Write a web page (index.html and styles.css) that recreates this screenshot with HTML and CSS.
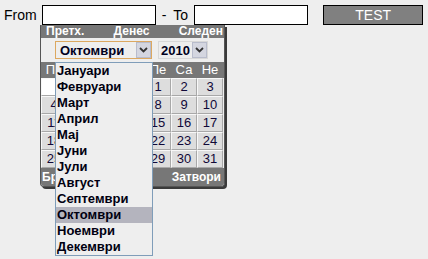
FILE: index.html
```html
<!DOCTYPE html>
<html lang="mk">
<head>
    <meta charset="UTF-8">
    <title>Календар</title>
    <link rel="stylesheet" href="styles.css">
</head>
<body>
    <div class="filter-bar">
        <span class="filter-label">From</span>
        <input type="text" class="filter-input">
        <span class="filter-dash">-</span>
        <span class="filter-label">To</span>
        <input type="text" class="filter-input">
        <button type="button" class="test-btn">TEST</button>
    </div>

    <div class="calendar">
        <div class="cal-nav">
            <span>Претх.</span>
            <span>Денес</span>
            <span>Следен</span>
        </div>
        <div class="cal-selects">
            <div class="fake-select month-select">
                <span class="fake-select-text">Октомври</span>
                <span class="fake-select-btn">
                    <svg width="9" height="6" viewBox="0 0 9 6"><path d="M1 1 L4.5 4.5 L8 1" fill="none" stroke="#333" stroke-width="1.8"/></svg>
                </span>
            </div>
            <div class="fake-select year-select">
                <span class="fake-select-text">2010</span>
                <span class="fake-select-btn">
                    <svg width="9" height="6" viewBox="0 0 9 6"><path d="M1 1 L4.5 4.5 L8 1" fill="none" stroke="#333" stroke-width="1.8"/></svg>
                </span>
            </div>
        </div>
        <div class="cal-grid cal-head">
            <span>По</span><span>Вт</span><span>Ср</span><span>Че</span><span>Пе</span><span>Са</span><span>Не</span>
        </div>
        <div class="cal-grid cal-body">
            <span class="day empty"></span><span class="day empty"></span><span class="day empty"></span><span class="day empty"></span>
            <span class="day">1</span><span class="day">2</span><span class="day">3</span>
            <span class="day">4</span><span class="day">5</span><span class="day">6</span><span class="day">7</span>
            <span class="day">8</span><span class="day">9</span><span class="day">10</span>
            <span class="day">11</span><span class="day">12</span><span class="day">13</span><span class="day">14</span>
            <span class="day">15</span><span class="day">16</span><span class="day">17</span>
            <span class="day">18</span><span class="day">19</span><span class="day">20</span><span class="day">21</span>
            <span class="day">22</span><span class="day">23</span><span class="day">24</span>
            <span class="day">25</span><span class="day">26</span><span class="day">27</span><span class="day">28</span>
            <span class="day">29</span><span class="day">30</span><span class="day">31</span>
        </div>
        <div class="cal-footer">
            <span>Бришење</span>
            <span>Затвори</span>
        </div>
    </div>

    <ul class="month-list">
        <li>Јануари</li>
        <li>Февруари</li>
        <li>Март</li>
        <li>Април</li>
        <li>Мај</li>
        <li>Јуни</li>
        <li>Јули</li>
        <li>Август</li>
        <li>Септември</li>
        <li class="selected">Октомври</li>
        <li>Ноември</li>
        <li>Декември</li>
    </ul>
</body>
</html>
```

FILE: styles.css
```css
body {
    margin: 0;
    padding: 0;
    background: #eeeeee;
    font-family: 'Liberation Sans', Arial, sans-serif;
    color: #000;
}

.filter-bar {
    display: flex;
    align-items: center;
    padding: 5px 0 0 4px;
    height: 20px;
}

.filter-label {
    font-size: 14px;
}

.filter-input {
    box-sizing: border-box;
    width: 114px;
    height: 20px;
    margin: 0 0 0 5px;
    padding: 0 2px;
    border: 1px solid #000;
    background: #fff;
}

.filter-input + .filter-dash {
    margin: 0 7px 0 6px;
}

.filter-dash {
    font-size: 14px;
}

.filter-label + .filter-input {
    margin-left: 5px;
}

.filter-dash + .filter-label + .filter-input {
    margin-left: 6px;
}

.test-btn {
    box-sizing: border-box;
    width: 100px;
    height: 20px;
    margin-left: 15px;
    padding: 0;
    border: 1px solid #000;
    background: #808080;
    color: #fff;
    font-family: 'Liberation Sans', Arial, sans-serif;
    font-size: 14px;
}

.calendar {
    position: absolute;
    left: 40px;
    top: 25px;
    width: 183px;
    border-left: 1px solid #555;
    border-right: 1px solid #555;
    border-bottom: 1px solid #555;
    border-radius: 0 0 4px 4px;
    background: #eeeeee;
    box-shadow: 2px 2px 0 #3a3a3a;
    overflow: hidden;
}

.cal-nav {
    display: flex;
    justify-content: space-between;
    height: 13px;
    padding: 0 1px 0 5px;
    background: #777777;
    color: #fff;
    font-size: 12px;
    font-weight: bold;
    line-height: 13px;
}

.cal-selects {
    display: flex;
    align-items: center;
    gap: 6px;
    height: 24px;
    padding-left: 14px;
}

.fake-select {
    box-sizing: border-box;
    display: flex;
    align-items: center;
    height: 18px;
    border: 1px solid #d8d8d8;
    background: #eeeeee;
}

.month-select {
    width: 97px;
    border-color: #dca860;
}

.year-select {
    width: 50px;
}

.fake-select-text {
    flex: 1;
    padding-left: 4px;
    font-size: 13px;
    font-weight: bold;
    color: #000020;
}

.year-select .fake-select-text {
    padding-left: 2px;
}

.fake-select-btn {
    box-sizing: border-box;
    display: flex;
    align-items: center;
    justify-content: center;
    width: 15px;
    height: 16px;
    border: 1px solid #b8bccc;
    background: #d4d6e0;
}

.cal-grid {
    display: grid;
    grid-template-columns: repeat(7, 26px);
}

.cal-head {
    height: 16px;
    background: #777777;
    color: #fff;
    font-size: 13px;
    line-height: 16px;
    text-align: center;
}

.day {
    box-sizing: border-box;
    height: 18px;
    border-top: 1px solid #f8f8f8;
    border-left: 1px solid #f8f8f8;
    border-right: 1px solid #a8a8a8;
    border-bottom: 1px solid #a8a8a8;
    background: #dddddd;
    color: #100838;
    font-size: 13px;
    line-height: 16px;
    text-align: center;
}

.day.empty {
    background: #fff;
}

.cal-footer {
    display: flex;
    justify-content: space-between;
    height: 18px;
    padding: 0 3px 0 1px;
    background: #777777;
    color: #fff;
    font-size: 12px;
    font-weight: bold;
    line-height: 18px;
}

.month-list {
    position: absolute;
    left: 55px;
    top: 62px;
    width: 96px;
    margin: 0;
    padding: 0;
    list-style: none;
    border: 1px solid #7f9db9;
    background: #eeeeee;
}

.month-list li {
    height: 16px;
    padding-left: 1px;
    font-size: 13px;
    font-weight: bold;
    line-height: 16px;
    color: #000010;
}

.month-list li.selected {
    background: #b4b4be;
}
```
